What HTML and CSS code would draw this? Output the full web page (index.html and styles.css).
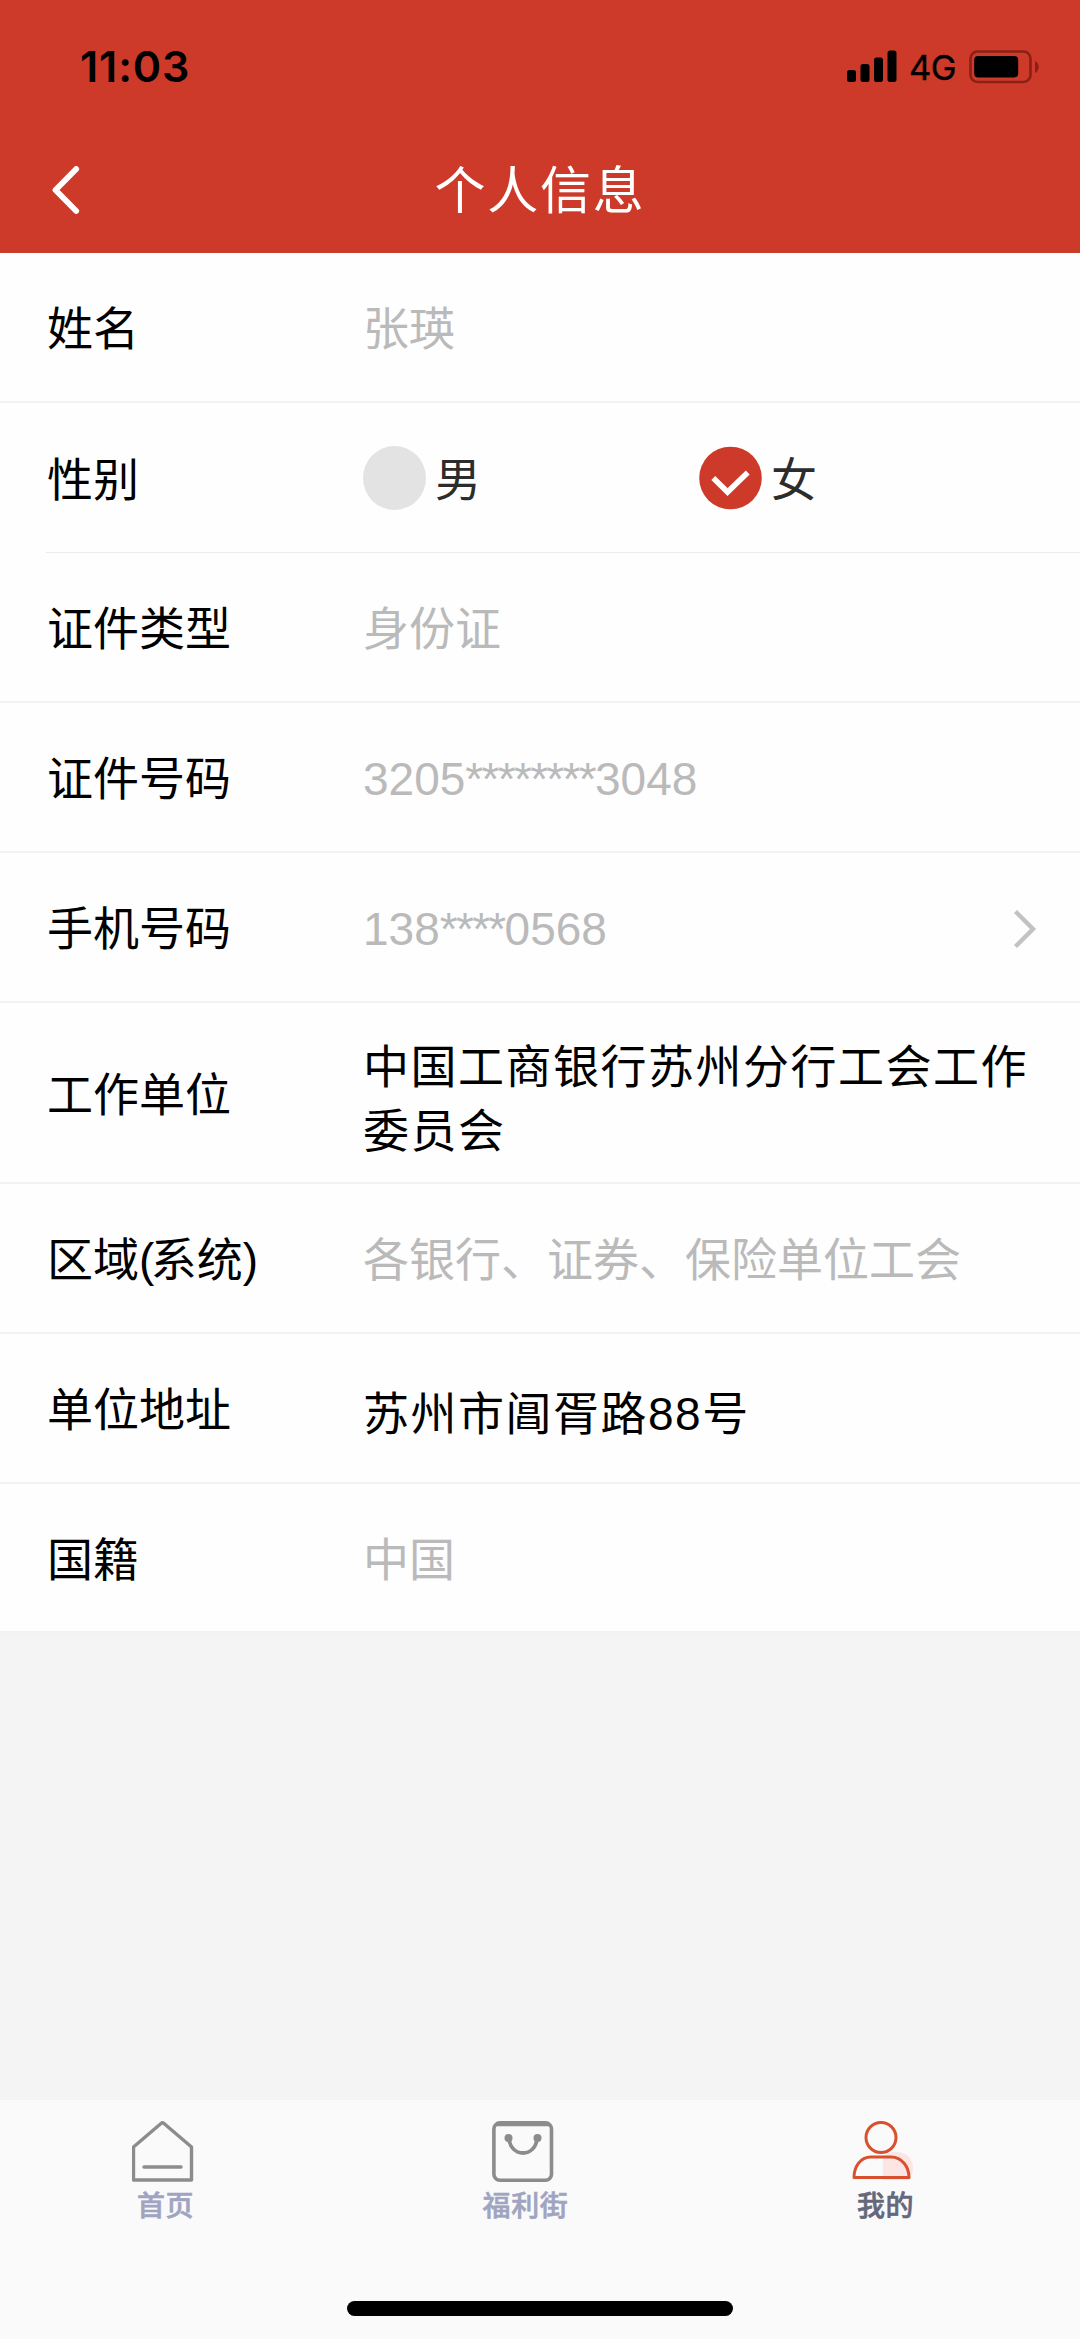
FILE: index.html
```
<!DOCTYPE html>
<html lang="zh-CN">
<head>
<meta charset="utf-8">
<title>个人信息</title>
<link rel="stylesheet" href="styles.css">
</head>
<body>
<div class="screen">
  <header class="header">
    <div class="status">
      <span class="time">11:03</span>
      <div class="status-right">
        <svg class="signal" width="50" height="32" viewBox="0 0 50 32">
          <rect x="0" y="20" width="9" height="12" rx="2.5"/>
          <rect x="13.5" y="14" width="9" height="18" rx="2.5"/>
          <rect x="27" y="7.500" width="9" height="24.500" rx="2.5"/>
          <rect x="40.500" y="0.500" width="9" height="31.500" rx="2.5"/>
        </svg>
        <span class="network">4G</span>
        <svg class="battery" width="71" height="34" viewBox="0 0 71 34">
          <rect x="1.500" y="1.500" width="60" height="30.500" rx="7" fill="none" stroke="#8c2015" stroke-width="2.600"/>
          <rect x="5.200" y="6" width="44" height="21.500" rx="4" fill="#000"/>
          <path d="M66 11c5 2 5 10 0 12z" fill="#8c2015"/>
        </svg>
      </div>
    </div>
    <div class="navbar">
      <svg class="back" width="28" height="48" viewBox="0 0 28 48">
        <path d="M24.200 3L3.500 24l20.700 21" fill="none" stroke="#fff" stroke-width="5.800" stroke-linecap="round" stroke-linejoin="round"/>
      </svg>
      <h1 class="title">个人信息</h1>
    </div>
  </header>

  <main class="form">
    <div class="row"><span class="label">姓名</span><span class="value muted">张瑛</span></div>
    <div class="row row-inset">
      <span class="label">性别</span>
      <div class="value radios">
        <div class="radio"><span class="dot"></span><span>男</span></div>
        <div class="radio">
          <svg class="dot-checked" width="63" height="64" viewBox="0 0 64 64">
            <circle cx="32" cy="32" r="31.800" fill="#cd3a29"/>
            <path d="M14.500 32L29 46.300L49.500 26.500" fill="none" stroke="#fff" stroke-width="5.600"/>
          </svg>
          <span>女</span>
        </div>
      </div>
    </div>
    <div class="row"><span class="label">证件类型</span><span class="value muted">身份证</span></div>
    <div class="row"><span class="label">证件号码</span><span class="value muted">3205<span class="mask">********</span>3048</span></div>
    <div class="row">
      <span class="label">手机号码</span><span class="value muted">138<span class="mask">****</span>0568</span>
      <svg class="arrow" width="24" height="40" viewBox="0 0 24 40">
        <path d="M2.500 2.500L20 20L2.500 37.500" fill="none" stroke="#c2c2c2" stroke-width="4.400"/>
      </svg>
    </div>
    <div class="row row-tall"><span class="label">工作单位</span><span class="value spaced multiline">中国工商银行苏州分行工会工作委员会</span></div>
    <div class="row"><span class="label">区域<span class="paren">(</span>系统<span class="paren">)</span></span><span class="value muted">各银行、证券、保险单位工会</span></div>
    <div class="row"><span class="label">单位地址</span><span class="value spaced lowered">苏州市阊胥路88号</span></div>
    <div class="row row-short"><span class="label">国籍</span><span class="value muted">中国</span></div>
  </main>

  <footer class="footer">
    <nav class="tabs">
      <div class="tab">
        <svg width="62" height="62" viewBox="0 0 62 62" fill="none" stroke="#8b8c8b" stroke-width="3.400" stroke-linejoin="round" stroke-linecap="round">
          <path d="M1.500 26L29 2.500q1.500-1.300 3 0L59.500 26V59H1.500z"/>
          <path d="M12 46H49"/>
        </svg>
        <span>首页</span>
      </div>
      <div class="tab">
        <svg width="62" height="62" viewBox="0 0 62 62" fill="none" stroke="#8b8c8b" stroke-width="3.600">
          <rect x="1.900" y="1.900" width="57.600" height="57.400" rx="6"/>
          <path d="M4 3.500H58"/>
          <path d="M17 17C18 37 44 37 45 17" stroke-width="3.800"/>
          <circle cx="16.500" cy="17" r="4" fill="#8b8c8b" stroke="none"/>
          <circle cx="45.500" cy="17" r="4" fill="#8b8c8b" stroke="none"/>
        </svg>
        <span>福利街</span>
      </div>
      <div class="tab tab-active">
        <svg width="62" height="62" viewBox="0 0 62 62" fill="none" stroke="#d9502f" stroke-width="3" stroke-linejoin="round">
          <path d="M31 59V37C37 27 60 28 61 46C61 53 59 58 56 59z" fill="#fbe6e4" stroke="none"/>
          <ellipse cx="29" cy="16.500" rx="15" ry="15"/>
          <path d="M2 56.500C2 46 8 36 19 36H39C50 36 57 46 57 56.500z"/>
        </svg>
        <span>我的</span>
      </div>
    </nav>
    <div class="home-indicator"></div>
  </footer>
</div>
</body>
</html>
```

FILE: styles.css
```
* { box-sizing: border-box; }

body {
  margin: 0;
  font-family: "Liberation Sans", "Noto Sans CJK SC", sans-serif;
}

.screen {
  display: flex;
  flex-direction: column;
  width: 1080px;
  height: 2339px;
  background: #f4f4f4;
}

.header {
  height: 253px;
  background: #cd3a29;
  border-bottom: 1px solid #c4432a;
}

.status {
  display: flex;
  justify-content: space-between;
  height: 127px;
  padding: 0 40px 0 80px;
  color: #000;
  font-family: Inter, sans-serif;
}

.time {
  padding-top: 40px;
  font-size: 43px;
  line-height: 52px;
  font-weight: 600;
  letter-spacing: 0.9px;
}

.status-right {
  display: flex;
  align-items: flex-start;
  padding-top: 50px;
}

.network {
  width: 47px;
  margin: 0 13px 0 12px;
  font-size: 34.5px;
  line-height: 35px;
  letter-spacing: -0.5px;
  -webkit-text-stroke: 0.4px #000;
}

.navbar {
  display: grid;
  grid-template-columns: 28px 1fr 28px;
  align-items: center;
  height: 126px;
  padding: 0 52px;
}

.title {
  margin: 0;
  padding-top: 4px;
  color: #fff;
  font-size: 51px;
  font-weight: 400;
  line-height: 72px;
  letter-spacing: 1.7px;
  text-align: center;
}

.form { background: #fefefe; }

.row {
  display: flex;
  align-items: center;
  height: 150px;
  padding: 4px 43px 0 47px;
  border-bottom: 2px solid #f2f2f2;
  font-size: 46px;
  line-height: 64px;
  color: #000;
}

.row-inset {
  margin-left: 46px;
  padding-left: 1px;
  border-bottom: 1px solid #ebebeb;
}

.row-tall { height: 181px; }
.row-short { height: 149px; }

.label { width: 316px; }
.value { flex: 1; }
.muted { color: #bababa; }
.mask { letter-spacing: -1.7px; }
.paren { letter-spacing: -3.6px; }
.spaced { letter-spacing: 1.5px; }
.multiline { padding-top: 8px; }
.lowered { padding-top: 8px; }

.radios {
  display: grid;
  grid-template-columns: 336px 1fr;
  color: #2c2c2c;
}

.radio {
  display: flex;
  align-items: center;
  gap: 9px;
}

.dot,
.dot-checked {
  width: 63px;
  height: 64px;
  margin-bottom: 4px;
}

.dot {
  border-radius: 50%;
  background: #e3e3e3;
}

.footer {
  display: flex;
  flex-direction: column;
  justify-content: space-between;
  align-items: center;
  height: 239px;
  margin-top: auto;
  padding: 21px 0 23px;
  background: #fafafa;
}

.tabs {
  display: grid;
  grid-template-columns: 331px 389px 331px;
  align-self: flex-start;
}

.tab {
  display: flex;
  flex-direction: column;
  align-items: center;
  color: #a0a4c1;
  font-size: 28px;
  font-weight: 500;
  line-height: 40px;
  letter-spacing: 0.6px;
  -webkit-text-stroke: 0.6px currentColor;
}

.tab svg { margin-right: 6px; }
.tab span { margin-top: 4px; }
.tab-active { color: #65677c; }

.home-indicator {
  width: 386px;
  height: 15px;
  border-radius: 8px;
  background: #000;
}
```
